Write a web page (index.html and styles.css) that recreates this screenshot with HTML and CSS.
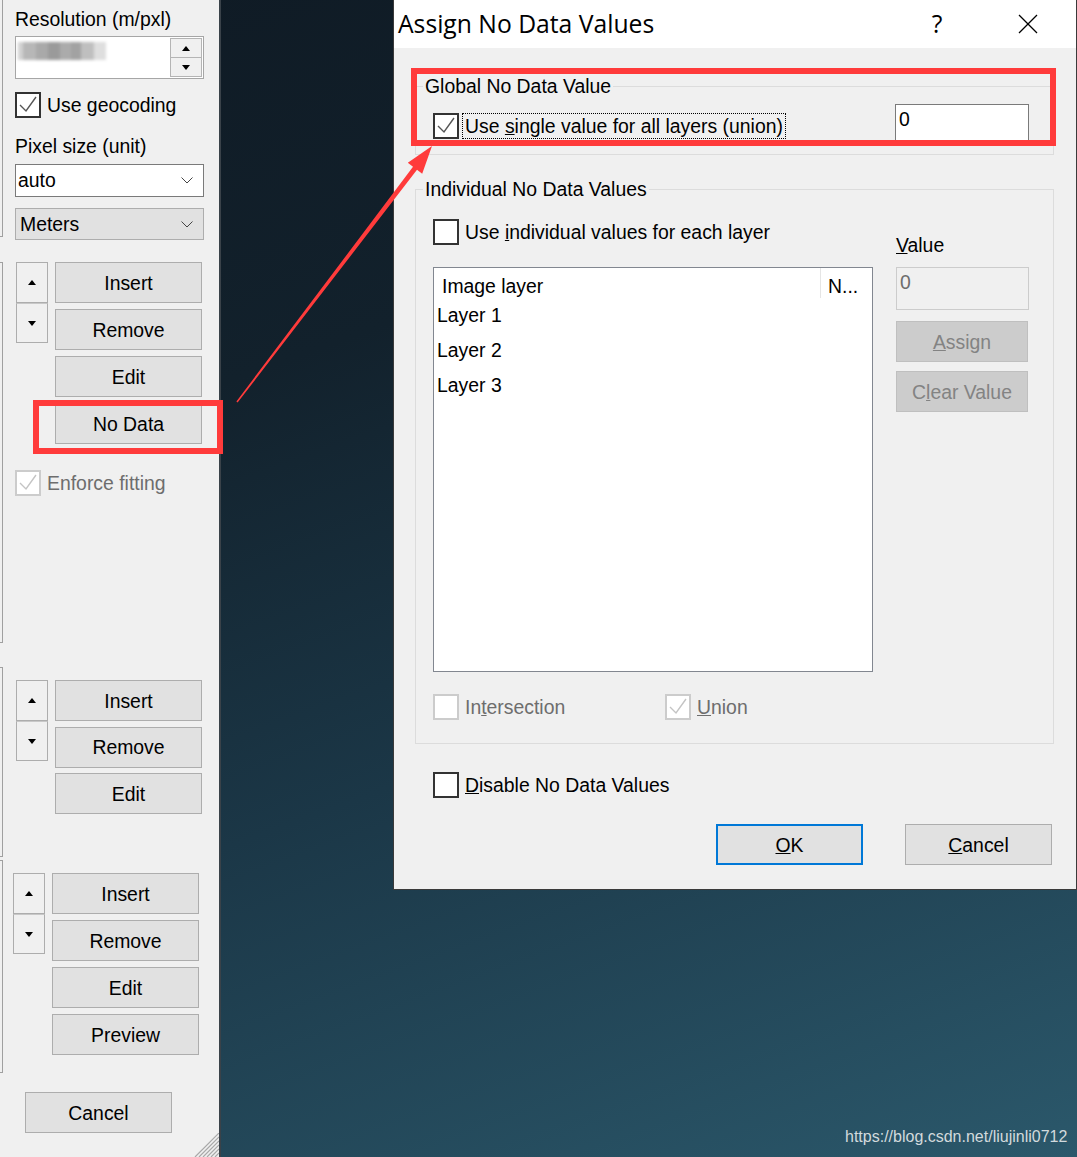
FILE: index.html
```html
<!DOCTYPE html>
<html>
<head>
<meta charset="utf-8">
<title>Assign No Data Values</title>
<link rel="stylesheet" href="styles.css">
</head>
<body>
<div class="screen">
  <aside class="panel">
    <div class="sect sect-a">
      <div class="edge"></div>
      <div class="sect-body">
        <div class="lbl lbl1">Resolution (m/pxl)</div>
        <div class="spin">
          <div class="spin-text"><span class="blur"></span></div>
          <div class="spin-btns">
            <div class="sb"><i class="tri up"></i></div>
            <div class="sb"><i class="tri down"></i></div>
          </div>
        </div>
        <div class="chk-row geo">
          <span class="cb"><svg width="22" height="22" viewBox="0 0 22 22"><polyline points="3,11 9,17 19,3" class="ck"/></svg></span>
          <span class="txt">Use geocoding</span>
        </div>
        <div class="lbl lbl2">Pixel size (unit)</div>
        <div class="combo combo-white"><span>auto</span><svg width="12" height="7" viewBox="0 0 12 7"><polyline points="0.5,0.5 6,6 11.5,0.5" class="chev"/></svg></div>
        <div class="combo combo-gray"><span>Meters</span><svg width="12" height="7" viewBox="0 0 12 7"><polyline points="0.5,0.5 6,6 11.5,0.5" class="chev"/></svg></div>
      </div>
    </div>

    <div class="sect sect-b">
      <div class="edge"></div>
      <div class="sect-body">
        <div class="btn-grid">
          <div class="arrows">
            <div class="arrow-btn"><i class="tri up"></i></div>
            <div class="arrow-btn"><i class="tri down"></i></div>
          </div>
          <div class="btn-col">
            <div class="btn">Insert</div>
            <div class="btn">Remove</div>
            <div class="btn">Edit</div>
            <div class="btn">No Data</div>
          </div>
        </div>
        <div class="chk-row enforce">
          <span class="cb dis"><svg width="22" height="22" viewBox="0 0 22 22"><polyline points="3,11 9,17 19,3" class="ck-dis"/></svg></span>
          <span class="txt gray">Enforce fitting</span>
        </div>
      </div>
    </div>

    <div class="sect sect-c">
      <div class="edge"></div>
      <div class="sect-body">
        <div class="btn-grid">
          <div class="arrows">
            <div class="arrow-btn"><i class="tri up"></i></div>
            <div class="arrow-btn"><i class="tri down"></i></div>
          </div>
          <div class="btn-col">
            <div class="btn">Insert</div>
            <div class="btn">Remove</div>
            <div class="btn">Edit</div>
          </div>
        </div>
      </div>
    </div>

    <div class="sect sect-d">
      <div class="edge"></div>
      <div class="sect-body">
        <div class="btn-grid">
          <div class="arrows">
            <div class="arrow-btn"><i class="tri up"></i></div>
            <div class="arrow-btn"><i class="tri down"></i></div>
          </div>
          <div class="btn-col">
            <div class="btn">Insert</div>
            <div class="btn">Remove</div>
            <div class="btn">Edit</div>
            <div class="btn">Preview</div>
          </div>
        </div>
      </div>
    </div>

    <div class="btn panel-cancel">Cancel</div>
    <svg class="grip" width="26" height="24" viewBox="0 0 26 24">
      <line x1="22" y1="24" x2="26" y2="20"/>
      <line x1="18" y1="24" x2="26" y2="16"/>
      <line x1="14" y1="24" x2="26" y2="12"/>
      <line x1="10" y1="24" x2="26" y2="8"/>
      <line x1="6" y1="24" x2="26" y2="4"/>
      <line x1="2" y1="24" x2="26" y2="0"/>
    </svg>
  </aside>

  <section class="dialog">
    <div class="titlebar">
      <span class="title">Assign No Data Values</span>
      <span class="help">?</span>
      <svg class="close" width="20" height="20" viewBox="0 0 20 20"><line x1="1" y1="1" x2="19" y2="19"/><line x1="19" y1="1" x2="1" y2="19"/></svg>
    </div>
    <div class="dbody">
      <fieldset class="grp">
        <legend>Global No Data Value</legend>
        <div class="grp-global">
          <div class="chk-row global-chk">
            <span class="cb"><svg width="22" height="22" viewBox="0 0 22 22"><polyline points="3,11 9,17 19,3" class="ck"/></svg></span>
            <span class="txt focus">Use <u>s</u>ingle value for all layers (union)</span>
          </div>
          <div class="txtbox">0</div>
        </div>
      </fieldset>

      <fieldset class="grp grp-ind">
        <legend>Individual No Data Values</legend>
        <div class="ind-inner">
          <div class="ind-top">
            <div class="ind-left">
              <div class="chk-row ind-chk">
                <span class="cb"></span>
                <span class="txt">Use <u>i</u>ndividual values for each layer</span>
              </div>
              <div class="list">
                <div class="list-head">
                  <span class="col1">Image layer</span>
                  <span class="col2">N...</span>
                </div>
                <div class="row">Layer 1</div>
                <div class="row">Layer 2</div>
                <div class="row">Layer 3</div>
              </div>
            </div>
            <div class="ind-right">
              <div class="val-lbl"><u>V</u>alue</div>
              <div class="val-in">0</div>
              <div class="btn dis-btn assign"><span><u>A</u>ssign</span></div>
              <div class="btn dis-btn clear"><span>C<u>l</u>ear Value</span></div>
            </div>
          </div>
          <div class="ind-bottom">
            <div class="chk-row inter">
              <span class="cb dis"></span>
              <span class="txt gray">In<u>t</u>ersection</span>
            </div>
            <div class="chk-row">
              <span class="cb dis"><svg width="22" height="22" viewBox="0 0 22 22"><polyline points="3,11 9,17 19,3" class="ck-dis"/></svg></span>
              <span class="txt gray"><u>U</u>nion</span>
            </div>
          </div>
        </div>
      </fieldset>

      <div class="chk-row disable">
        <span class="cb"></span>
        <span class="txt"><u>D</u>isable No Data Values</span>
      </div>

      <div class="dlg-btns">
        <div class="btn dlg-btn ok"><span><u>O</u>K</span></div>
        <div class="btn dlg-btn"><span><u>C</u>ancel</span></div>
      </div>
    </div>
  </section>

  <div class="hl hl-nodata"></div>
  <div class="hl hl-global"></div>
  <svg class="annot" width="1077" height="1157" viewBox="0 0 1077 1157">
    <polygon points="236.4,401.5 413,166.8 407.8,162.8 432,146 422.2,173.8 417,169.8 237.6,402.5" fill="#ff3b3b"/>
  </svg>
  <div class="watermark">https://blog.csdn.net/liujinli0712</div>
</div>
</body>
</html>
```
FILE: styles.css
```css
* { box-sizing: border-box; }
html, body { margin: 0; padding: 0; }
body {
  width: 1077px;
  height: 1157px;
  overflow: hidden;
  font-family: "Liberation Sans", Arial, sans-serif;
  font-size: 19.4px;
  color: #000;
}
.screen {
  position: relative;
  width: 1077px;
  height: 1157px;
  overflow: hidden;
  background: linear-gradient(160deg, #0f1a24 0%, #12212c 30%, #1b3747 60%, #2b586b 100%);
}

/* ---------- left panel ---------- */
.panel {
  width: 221px;
  height: 1157px;
  background: #f0f0f0;
  border-right: 2px solid #3a4249;
  display: flex;
  flex-direction: column;
}
.sect {
  display: grid;
  grid-template-columns: 3px 1fr;
  flex: none;
}
.edge {
  border: 1px solid #a0a0a0;
  border-left: none;
}
.sect-a { height: 240px; }
.sect-a .edge { height: 237px; border-top: none; }
.sect-a .sect-body { padding-left: 12px; }

.lbl { height: 22px; line-height: 22px; white-space: nowrap; }
.lbl1 { margin-top: 8px; }
.lbl2 { margin-top: 17px; }

.spin {
  margin-top: 6px;
  width: 189px;
  height: 43px;
  border: 1px solid #a6a6a6;
  background: #fff;
  display: flex;
}
.spin-text { flex: 1; overflow: hidden; }
.blur {
  display: block;
  margin: 5px 0 0 2px;
  width: 88px;
  height: 18px;
  background: linear-gradient(90deg, #d2d2d2 0 6%, #b7b7b7 6% 20%, #a9a9a9 20% 34%, #9a9a9a 34% 48%, #ababab 48% 60%, #a2a2a2 60% 72%, #bfbfbf 72% 86%, #dedede 86% 100%);
  filter: blur(1.6px);
}
.spin-btns {
  width: 33px;
  padding: 1px 1px 1px 0;
  display: flex;
  flex-direction: column;
}
.sb {
  flex: 1;
  background: #f0f0f0;
  border: 1px solid #b4b4b4;
  display: flex;
  align-items: center;
  justify-content: center;
}
.sb + .sb { border-top: none; }

.tri { display: block; width: 0; height: 0; border-left: 4.5px solid transparent; border-right: 4.5px solid transparent; }
.tri.up { border-bottom: 5px solid #000; }
.tri.down { border-top: 5px solid #000; }

.chk-row { display: flex; align-items: center; height: 26px; }
.cb {
  width: 26px;
  height: 26px;
  flex: none;
  border: 2px solid #333;
  background: #fff;
}
.cb svg { display: block; }
.cb.dis { border-color: #cccccc; }
.ck { fill: none; stroke: #555; stroke-width: 1.4; }
.ck-dis { fill: none; stroke: #c4c4c4; stroke-width: 1.4; }
.txt { margin-left: 6px; white-space: nowrap; line-height: 22px; }
.gray { color: #6d6d6d; }
.geo { margin-top: 13px; }

.combo {
  width: 189px;
  display: flex;
  align-items: center;
  justify-content: space-between;
  white-space: nowrap;
}
.combo-white {
  margin-top: 7px;
  height: 33px;
  background: #fff;
  border: 1px solid #7a7a7a;
  padding: 0 10px 0 2px;
}
.combo-gray {
  margin-top: 11px;
  height: 32px;
  background: #e1e1e1;
  border: 1px solid #adadad;
  padding: 0 10px 0 4px;
}
.chev { fill: none; stroke: #444; stroke-width: 1; }

.btn {
  height: 41px;
  background: #e1e1e1;
  border: 1px solid #adadad;
  display: flex;
  align-items: center;
  justify-content: center;
  line-height: 22px;
  white-space: nowrap;
}
.btn-grid {
  display: grid;
  grid-template-columns: 32px 147px;
  column-gap: 7px;
  align-items: start;
}
.arrows { display: flex; flex-direction: column; }
.arrow-btn {
  height: 41px;
  background: #f0f0f0;
  border: 1px solid #adadad;
  display: flex;
  align-items: center;
  justify-content: center;
}
.arrow-btn + .arrow-btn { height: 40px; border-top: 1px solid #c8c8c8; }
.btn-col { display: flex; flex-direction: column; gap: 6px; }

.sect-b { margin-top: 22px; height: 381px; }
.sect-b .sect-body { padding-left: 13px; }
.enforce { margin-top: 26px; margin-left: -1px; }

.sect-c { margin-top: 24px; height: 190px; }
.sect-c .sect-body { padding: 13px 0 0 13px; }
.sect-c .btn-col { gap: 5.5px; }

.sect-d { margin-top: 3px; height: 213px; }
.sect-d .sect-body { padding: 13px 0 0 10px; }

.panel-cancel { margin: 19px 0 0 25px; width: 147px; flex: none; }
.grip { margin-top: auto; align-self: flex-end; display: block; }
.grip line { stroke: #a8a8a8; stroke-width: 1.2; }

/* ---------- dialog ---------- */
.dialog {
  position: absolute;
  left: 393px;
  top: 0;
  width: 684px;
  background: #f0f0f0;
  border: 1px solid #3a3a3a;
  border-top: none;
}
.titlebar {
  height: 48px;
  background: #fff;
  display: flex;
  align-items: center;
  padding-left: 4px;
  font-family: "Open Sans", "Noto Sans", sans-serif;
  font-size: 24.7px;
}
.title { flex: 1; line-height: 48px; white-space: nowrap; }
.help { width: 24px; text-align: center; line-height: 48px; }
.close { margin: 0 38px 0 69px; display: block; }
.close line { stroke: #000; stroke-width: 1.3; }

.dbody { padding: 27px 22px 24px 21px; }

.grp {
  margin: 0;
  padding: 0;
  min-width: 0;
  border: 1px solid #dcdcdc;
}
.grp legend {
  margin-left: 7px;
  padding: 0 2px;
  line-height: 22px;
  height: 22px;
  font-size: 19.4px;
  white-space: nowrap;
}
.grp-global {
  display: flex;
  align-items: center;
  padding: 7px 24px 10px 17px;
  box-sizing: content-box;
  height: 40px;
}
.global-chk { margin-top: 4px; }
.focus {
  margin-left: 3px;
  border: 1px dotted #000;
  padding: 1px 2px;
}
.txtbox {
  margin-left: auto;
  width: 134px;
  height: 40px;
  border: 1px solid #7a7a7a;
  background: #fff;
  padding: 3px 3px;
  line-height: 22px;
}

.grp-ind { margin-top: 23px; }
.ind-inner { padding: 0 24px 23px 17px; }
.ind-top {
  display: grid;
  grid-template-columns: 440px 133px;
  column-gap: 23px;
  align-items: start;
}
.ind-chk { margin-top: 19px; }
.list {
  margin-top: 22px;
  height: 405px;
  border: 1px solid #828790;
  background: #fff;
}
.list-head { display: flex; height: 30px; }
.list-head .col1 {
  width: 387px;
  height: 30px;
  padding: 7px 0 0 8px;
  line-height: 22px;
  border-right: 1px solid #e5e5e5;
}
.list-head .col2 { padding: 7px 0 0 7px; line-height: 22px; }
.row { height: 35px; line-height: 35px; padding-left: 3px; }

.val-lbl { margin-top: 34px; line-height: 22px; }
.val-in {
  margin-top: 11px;
  height: 43px;
  background: #f0f0f0;
  border: 1px solid #cccccc;
  color: #6d6d6d;
  padding: 3px 3px;
  line-height: 22px;
}
.dis-btn {
  width: 132px;
  background: #cccccc;
  border-color: #bfbfbf;
  color: #838383;
}
.assign { margin-top: 11px; }
.clear { margin-top: 9px; }

.ind-bottom { display: flex; margin-top: 22px; }
.inter { width: 232px; }

.disable { margin: 28px 0 0 18px; }

.dlg-btns {
  display: flex;
  justify-content: flex-end;
  gap: 42px;
  margin: 26px 2px 0 0;
}
.dlg-btn { width: 147px; }
.dlg-btn.ok { border: 2px solid #0078d7; }

/* ---------- annotations ---------- */
.hl { position: absolute; border: 6px solid #ff3b3b; }
.hl-nodata { left: 33px; top: 400px; width: 190px; height: 54px; }
.hl-global { left: 411px; top: 68px; width: 645px; height: 78px; }
.annot { position: absolute; left: 0; top: 0; pointer-events: none; }
.watermark {
  position: absolute;
  left: 845px;
  top: 1127px;
  line-height: 20px;
  font-size: 16px;
  color: #d2dadd;
  white-space: nowrap;
}
```
